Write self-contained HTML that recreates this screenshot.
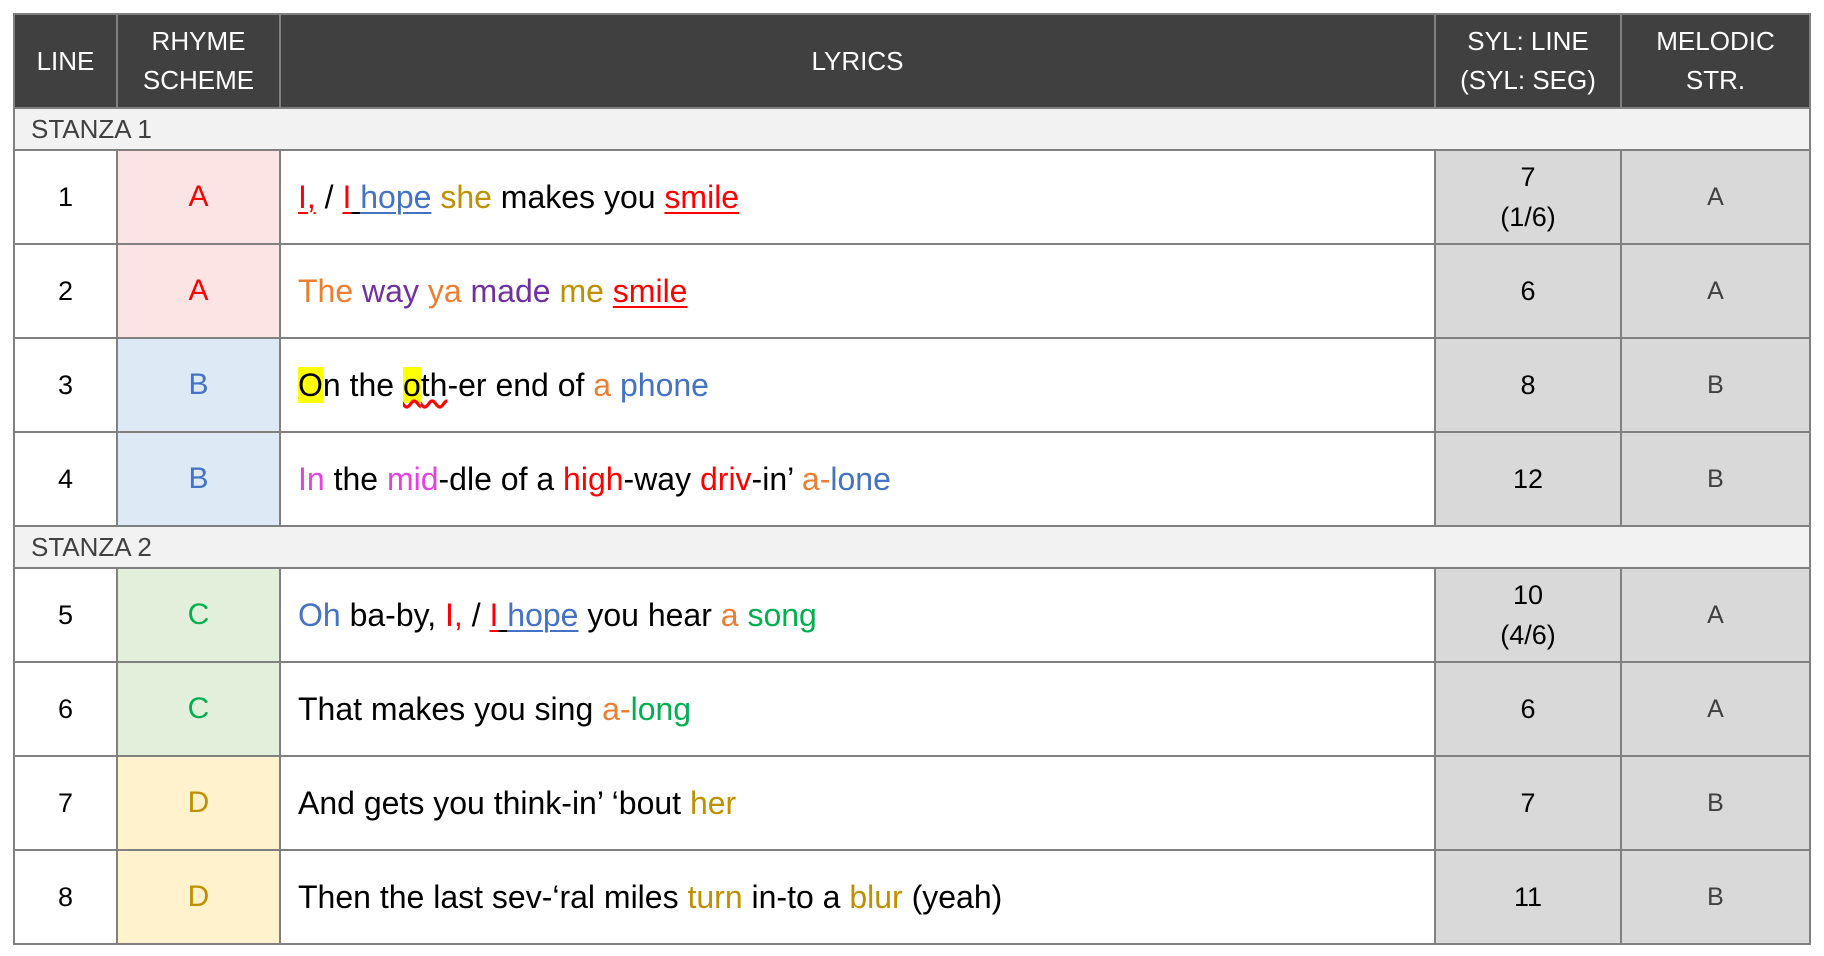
<!DOCTYPE html>
<html><head><meta charset="utf-8">
<style>
body{margin:0;background:#fff;width:1824px;height:956px;overflow:hidden;font-family:"Liberation Sans",sans-serif;}
table{position:absolute;left:13px;top:13px;border-collapse:collapse;table-layout:fixed;}
td,th{border:2px solid #808080;padding:0;text-align:center;font-size:27px;}
th{background:#404040;color:#fff;font-weight:normal;font-size:26px;line-height:39px;height:92px;}
.st td{background:#f2f2f2;color:#404040;text-align:left;padding-left:16px;height:40px;font-size:26px;}
.r td{height:92px;}
.ly{text-align:left;padding-left:17px;color:#000;font-size:32px;}
.g{background:#d9d9d9;color:#000;line-height:40px;}
.m{background:#d9d9d9;color:#404040;font-size:25px;}
.pk{background:#fce4e4;color:#ff0000;font-size:30px;}
.bl{background:#dde9f5;color:#4472c4;font-size:30px;}
.gr{background:#e2efda;color:#00b050;font-size:30px;}
.ye{background:#fff2cc;color:#bf9000;font-size:30px;}
.R{color:#ff0000}.B{color:#4472c4}.Y{color:#bf9000}.O{color:#ed7d31}.P{color:#7030a0}.G{color:#00b050}.M{color:#e83fe0}
.u{text-decoration:underline;text-decoration-thickness:2px;text-underline-offset:4px;}
.hl{background:#ffff00;}
.w{text-decoration:underline wavy #ff0000;text-underline-offset:4px;}
</style></head><body>
<table>
<colgroup><col style="width:103px"><col style="width:163px"><col style="width:1155px"><col style="width:186px"><col style="width:189px"></colgroup>
<tr><th>LINE</th><th>RHYME<br>SCHEME</th><th>LYRICS</th><th>SYL: LINE<br>(SYL: SEG)</th><th>MELODIC<br>STR.</th></tr>
<tr class="st"><td colspan="5">STANZA 1</td></tr>
<tr class="r"><td>1</td><td class="pk">A</td><td class="ly"><span class="R u">I,</span> / <span class="R u">I</span><span class="u"> </span><span class="B u">hope</span> <span class="Y">she</span> makes you <span class="R u">smile</span></td><td class="g">7<br>(1/6)</td><td class="m">A</td></tr>
<tr class="r"><td>2</td><td class="pk">A</td><td class="ly"><span class="O">The</span> <span class="P">way</span> <span class="O">ya</span> <span class="P">made</span> <span class="Y">me</span> <span class="R u">smile</span></td><td class="g">6</td><td class="m">A</td></tr>
<tr class="r"><td>3</td><td class="bl">B</td><td class="ly"><span class="hl">O</span>n the <span class="w"><span class="hl">o</span>th</span>-er end of <span class="O">a</span> <span class="B">phone</span></td><td class="g">8</td><td class="m">B</td></tr>
<tr class="r"><td>4</td><td class="bl">B</td><td class="ly"><span class="M">In</span> the <span class="M">mid</span>-dle of a <span class="R">high</span>-way <span class="R">driv</span>-in’ <span class="O">a-</span><span class="B">lone</span></td><td class="g">12</td><td class="m">B</td></tr>
<tr class="st"><td colspan="5">STANZA 2</td></tr>
<tr class="r"><td>5</td><td class="gr">C</td><td class="ly"><span class="B">Oh</span> ba-by, <span class="R">I,</span> / <span class="R u">I</span><span class="u"> </span><span class="B u">hope</span> you hear <span class="O">a</span> <span class="G">song</span></td><td class="g">10<br>(4/6)</td><td class="m">A</td></tr>
<tr class="r"><td>6</td><td class="gr">C</td><td class="ly">That makes you sing <span class="O">a-</span><span class="G">long</span></td><td class="g">6</td><td class="m">A</td></tr>
<tr class="r"><td>7</td><td class="ye">D</td><td class="ly">And gets you think-in’ ‘bout <span class="Y">her</span></td><td class="g">7</td><td class="m">B</td></tr>
<tr class="r"><td>8</td><td class="ye">D</td><td class="ly">Then the last sev-‘ral miles <span class="Y">turn</span> in-to a <span class="Y">blur</span> (yeah)</td><td class="g">11</td><td class="m">B</td></tr>
</table>
</body></html>
